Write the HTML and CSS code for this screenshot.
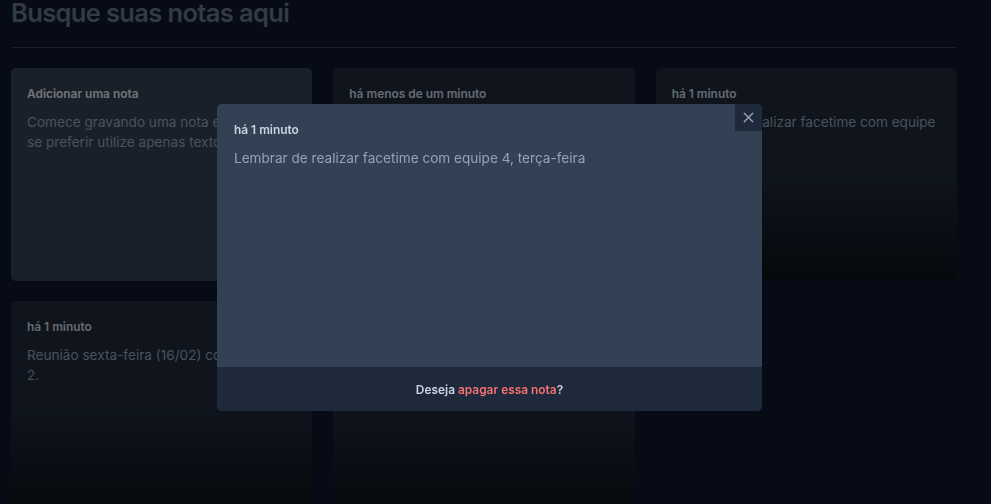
FILE: index.html
```html
<!DOCTYPE html>
<html lang="pt-BR">
<head>
<meta charset="utf-8">
<title>Notas</title>
<link rel="stylesheet" href="styles.css">
</head>
<body>
<main class="page">
  <h1 class="search">Busque suas notas aqui</h1>
  <div class="divider"></div>
  <div class="grid">
    <div class="card card-add">
      <span class="card-title">Adicionar uma nota</span>
      <p class="card-text">Comece gravando uma nota em áudio ou se preferir utilize apenas texto.</p>
    </div>
    <div class="card">
      <span class="card-title">há menos de um minuto</span>
      <p class="card-text">Enviar relatório semanal para o time de produto até sexta.</p>
      <div class="fade"></div>
    </div>
    <div class="card">
      <span class="card-title">há 1 minuto</span>
      <p class="card-text">Lembrar de realizar facetime com equipe 4, terça-feira</p>
      <div class="fade"></div>
    </div>
    <div class="card">
      <span class="card-title">há 1 minuto</span>
      <p class="card-text">Reunião sexta-feira (16/02) com a equipe 2.</p>
      <div class="fade"></div>
    </div>
    <div class="card">
      <span class="card-title">há 1 minuto</span>
      <p class="card-text">Revisar o layout da nova página inicial.</p>
      <div class="fade"></div>
    </div>
  </div>
</main>

<div class="overlay"></div>
<div class="modal">
  <button class="close" aria-label="Fechar">
    <svg viewBox="0 0 24 24" width="17" height="17" fill="none" stroke="currentColor" stroke-width="2" stroke-linecap="round" stroke-linejoin="round"><path d="M18 6 6 18"/><path d="m6 6 12 12"/></svg>
  </button>
  <div class="modal-body">
    <span class="modal-title">há 1 minuto</span>
    <p class="modal-text">Lembrar de realizar facetime com equipe 4, terça-feira</p>
  </div>
  <button class="modal-footer">Deseja <span class="danger">apagar essa nota</span>?</button>
</div>
</body>
</html>
```

FILE: styles.css
```css
* { box-sizing: border-box; }

html, body {
  margin: 0;
  padding: 0;
  background: #0f172a;
  font-family: Inter, "Noto Sans", sans-serif;
  overflow: hidden;
  height: 100%;
}

.page {
  width: 946px;
  margin-left: 11px;
  margin-top: -2px;
  display: flex;
  flex-direction: column;
}

.search {
  margin: 0;
  height: 30px;
  font-size: 25.5px;
  line-height: 30px;
  font-weight: 600;
  letter-spacing: -0.025em;
  color: #64748b;
}

.divider {
  height: 1px;
  background: #334155;
  margin-top: 19px;
}

.grid {
  margin-top: 20px;
  display: grid;
  grid-template-columns: repeat(3, 1fr);
  grid-auto-rows: 213px;
  gap: 20px 21px;
}

.card {
  position: relative;
  overflow: hidden;
  border-radius: 5px;
  background: #1e293b;
  padding: 17px 17px 17px 16px;
  display: flex;
  flex-direction: column;
  gap: 10px;
}

.card-add {
  background: #334155;
}

.card-title {
  font-size: 11.9px;
  line-height: 17px;
  font-weight: 600;
  color: #cbd5e1;
}

.card-add .card-title {
  color: #e2e8f0;
}

.card-text {
  margin: 0;
  font-size: 13.6px;
  line-height: 20px;
  color: #94a3b8;
}

.fade {
  position: absolute;
  left: 0;
  right: 0;
  bottom: 0;
  height: 50%;
  background: linear-gradient(to top, rgba(0,0,0,0.6), rgba(0,0,0,0));
  pointer-events: none;
}

.overlay {
  position: fixed;
  inset: 0;
  background: rgba(0, 0, 0, 0.5);
}

.modal {
  position: fixed;
  left: 217px;
  top: 104px;
  width: 545px;
  height: 307px;
  background: #334155;
  border-radius: 5px;
  overflow: hidden;
  display: flex;
  flex-direction: column;
}

.close {
  position: absolute;
  top: 0;
  right: 0;
  width: 27px;
  height: 27px;
  border: 0;
  padding: 0;
  background: #1e293b;
  color: #94a3b8;
  display: flex;
  align-items: center;
  justify-content: center;
}

.modal-body {
  flex: 1;
  padding: 17px;
  display: flex;
  flex-direction: column;
  gap: 10px;
}

.modal-title {
  font-size: 11.9px;
  line-height: 17px;
  font-weight: 600;
  color: #cbd5e1;
}

.modal-text {
  margin: 0;
  font-size: 13.6px;
  line-height: 20px;
  color: #94a3b8;
}

.modal-footer {
  height: 44px;
  border: 0;
  background: #1e293b;
  font-family: inherit;
  font-size: 11.9px;
  font-weight: 600;
  color: #cbd5e1;
  text-align: center;
  padding: 0;
}

.danger {
  color: #f87171;
}
```
